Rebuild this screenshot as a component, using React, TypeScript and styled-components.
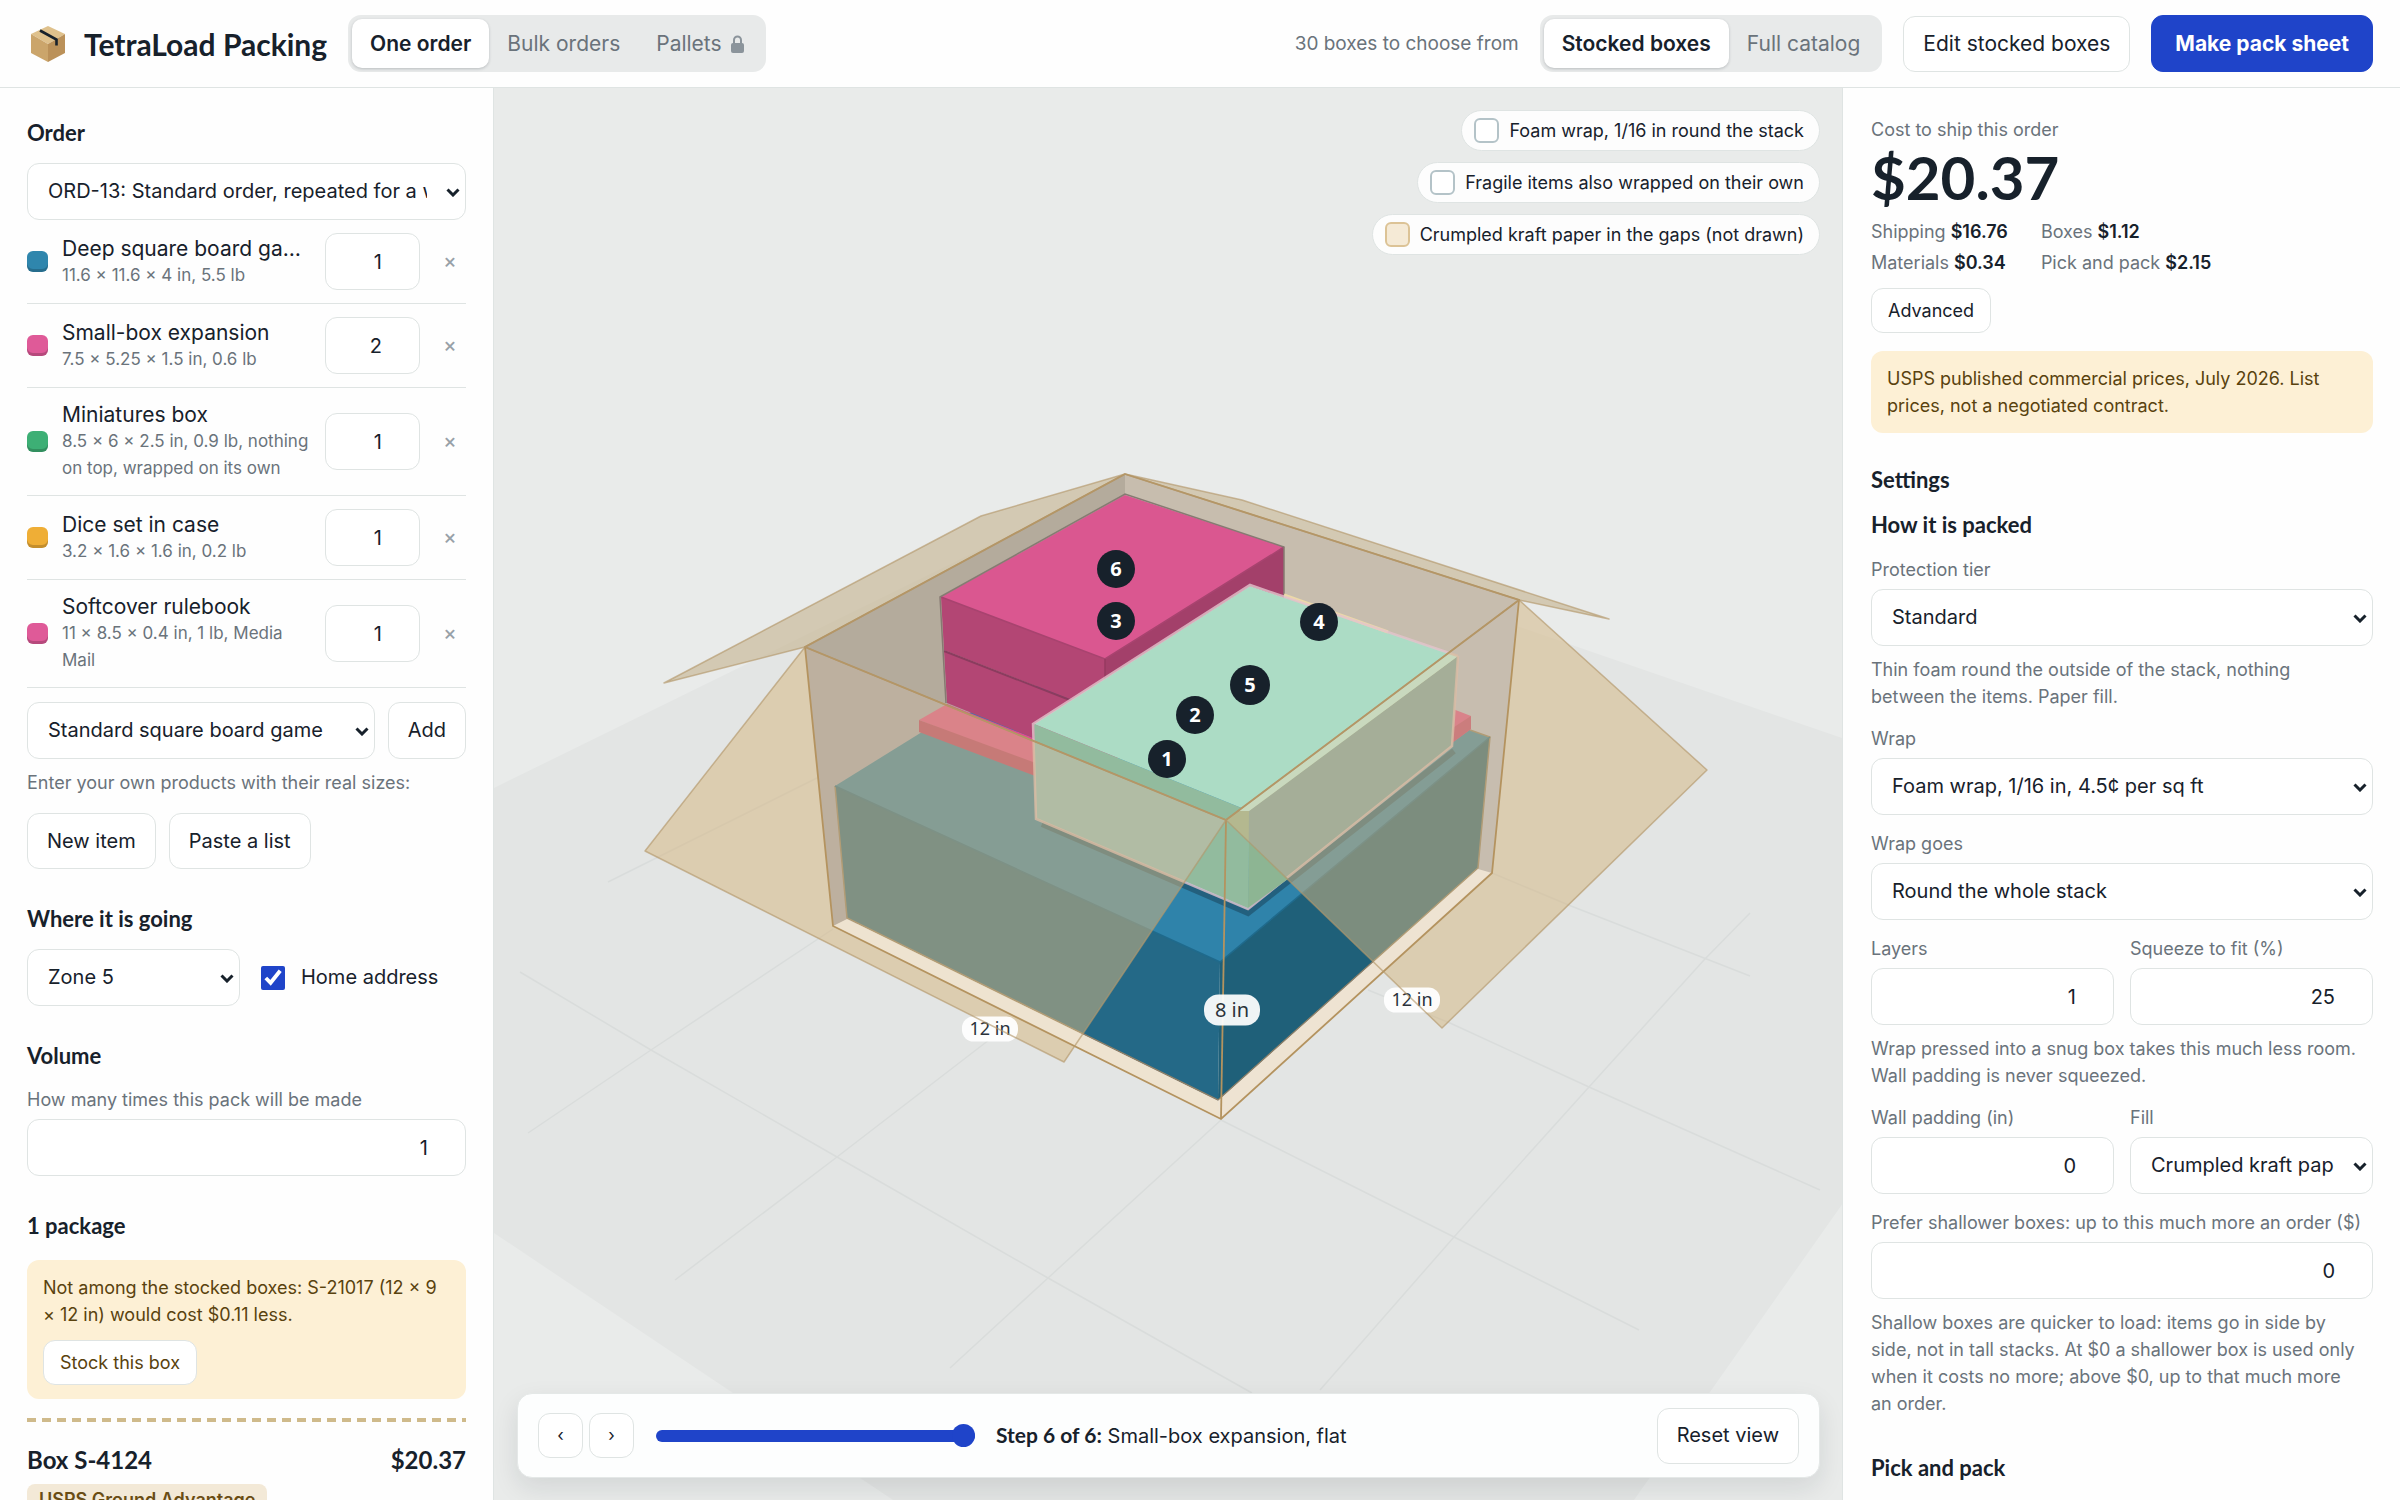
import React, { useState } from "react";
import styled, { createGlobalStyle, css } from "styled-components";

const ink = "#17212b";
const muted = "#6a737b";
const line = "#dfe4e3";
const blue = "#1f44c9";
const heading = `"Lato", "Open Sans", sans-serif`;

const GlobalStyle = createGlobalStyle`
  * { box-sizing: border-box; }
  body { margin: 0; background: #fefefe; color: ${ink}; font: 400 20px/27px "Inter", "Noto Sans", sans-serif; }
  button, input, select { font: inherit; color: inherit; margin: 0; }
  h1, h2, h3, p, ul, dl, dd { margin: 0; padding: 0; }
`;

/* ---------- shared parts ---------- */

const Button = styled.button<{ $size?: "small" | "icon"; $primary?: boolean }>`
  height: 56px;
  padding: 0 19px;
  border: 1px solid ${line};
  border-radius: 12px;
  background: #fff;
  white-space: nowrap;
  ${(p) => p.$size === "small" && css`height: 45px; padding: 0 16px; font-size: 18px;`}
  ${(p) => p.$size === "icon" && css`height: 45px; width: 45px; padding: 0; font-size: 17px;`}
  ${(p) => p.$primary && css`
    height: 57px;
    padding: 0 23px;
    border-color: ${blue};
    background: ${blue};
    color: #fff;
    font-weight: 700;
  `}
`;

const fieldBox = css`
  width: 100%;
  height: 57px;
  border: 1px solid ${line};
  border-radius: 12px;
  background: #fff;
  outline: 0;
`;

const NumberInput = styled.input.attrs({ type: "number" })`
  ${fieldBox}
  padding: 0 37px 0 12px;
  text-align: right;
  appearance: textfield;
  &::-webkit-inner-spin-button { display: none; }
`;

const SelectWrap = styled.div`
  position: relative;
  flex: 1;
  min-width: 0;
  svg { position: absolute; right: 6px; top: 50%; margin-top: -4px; pointer-events: none; }
`;

const NativeSelect = styled.select`
  ${fieldBox}
  display: block;
  appearance: none;
  padding: 0 38px 0 20px;
`;

function Select({ id, label, value }: { id: string; label?: string; value: string }) {
  return (
    <SelectWrap>
      <NativeSelect id={id} aria-label={label} defaultValue={value}>
        <option>{value}</option>
      </NativeSelect>
      <svg width="14" height="9" viewBox="0 0 14 9" aria-hidden="true">
        <path d="M1.5 1.5 7 7l5.5-5.5" fill="none" stroke={ink} strokeWidth="3" />
      </svg>
    </SelectWrap>
  );
}

const SectionTitle = styled.h2`
  font: 700 22px/27px ${heading};
`;

const Hint = styled.p`
  padding-right: 12px;
  color: ${muted};
  font-size: 18px;
`;

const FieldBlock = styled.div`
  display: flex;
  flex-direction: column;
  gap: 6px;
  min-width: 0;
  label { color: ${muted}; font-size: 18px; white-space: nowrap; }
  ${Hint} { margin-top: 4px; }
`;

const Notice = styled.div`
  display: flex;
  flex-direction: column;
  align-items: flex-start;
  gap: 12px;
  padding: 14px 16px;
  border-radius: 12px;
  background: #fdf0d5;
  color: #59420e;
  font-size: 18px;
`;

/* ---------- page frame ---------- */

const Page = styled.div`
  display: flex;
  flex-direction: column;
  height: 100vh;
`;

const Header = styled.header`
  display: flex;
  align-items: center;
  gap: 21px;
  flex: none;
  height: 88px;
  padding: 0 27px;
  border-bottom: 1px solid ${line};
  font-size: 21px;
`;

const Brand = styled.h1`
  display: flex;
  align-items: center;
  gap: 15px;
  font: 700 30px/36px ${heading};
  white-space: nowrap;
`;

const HeaderNote = styled.span`
  margin-left: auto;
  color: ${muted};
  font-size: 19px;
`;

const Segments = styled.div`
  display: flex;
  padding: 4px;
  border-radius: 13px;
  background: #e8eaea;
`;

const Segment = styled.button<{ $active?: boolean }>`
  display: flex;
  align-items: center;
  gap: 9px;
  height: 49px;
  padding: 0 18px;
  border: 0;
  border-radius: 10px;
  background: transparent;
  color: ${muted};
  white-space: nowrap;
  ${(p) => p.$active && css`
    background: #fff;
    color: ${ink};
    font-weight: 600;
    box-shadow: 0 1px 3px rgba(23, 33, 43, 0.22);
  `}
`;

const Columns = styled.div`
  display: grid;
  grid-template-columns: 494px minmax(0, 1fr) 558px;
  flex: 1;
  min-height: 0;
`;

const Panel = styled.aside<{ $side: "left" | "right" }>`
  display: flex;
  flex-direction: column;
  overflow-y: auto;
  scrollbar-width: none;
  padding: ${(p) => (p.$side === "left" ? "31px 27px 0" : "28px 27px 0 28px")};
  border: 0 solid ${line};
  border-${(p) => (p.$side === "left" ? "right" : "left")}-width: 1px;
`;

/* ---------- order panel ---------- */

const Section = styled.section`
  display: flex;
  flex-direction: column;
  flex: none;
  margin-bottom: 36px;
  > ${SectionTitle} { margin-bottom: 17px; }
`;

const ItemList = styled.ul`
  list-style: none;
  margin-bottom: 14px;
`;

const ItemRow = styled.li`
  display: grid;
  grid-template-columns: 21px minmax(0, 1fr) 95px 32px;
  align-items: center;
  gap: 14px;
  padding: 13px 0;
  border-bottom: 1px solid ${line};
`;

const Swatch = styled.span<{ $color: string }>`
  width: 21px;
  height: 21px;
  border-radius: 6px;
  background: ${(p) => p.$color};
  box-shadow: inset 0 -3px 0 rgba(0, 0, 0, 0.18);
`;

const ItemName = styled.div`
  overflow: hidden;
  font-size: 21px;
  text-overflow: ellipsis;
  white-space: nowrap;
`;

const ItemDetail = styled.div`
  color: ${muted};
  font-size: 17px;
`;

const RemoveButton = styled.button`
  height: 32px;
  padding: 0;
  border: 0;
  background: none;
  color: #98a1a8;
  font-weight: 500;
`;

const ButtonRow = styled.div`
  display: flex;
  gap: 13px;
`;

const AddRow = styled(ButtonRow)`
  margin-bottom: 10px;
  ${Button} { height: 57px; }
`;

const OwnProducts = styled(Hint)`
  margin-bottom: 17px;
`;

const Destination = styled.div`
  display: grid;
  grid-template-columns: 213px 1fr;
  align-items: center;
  gap: 21px;
`;

const CheckLabel = styled.label`
  display: flex;
  align-items: center;
  gap: 16px;
`;

const CheckBox = styled.input.attrs({ type: "checkbox" })`
  width: 24px;
  height: 24px;
  accent-color: ${blue};
`;

const PackageNotice = styled(Notice)`
  margin-top: 4px;
`;

const TapeLine = styled.hr`
  width: 100%;
  height: 4px;
  margin: 19px 0 22px;
  border: 0;
  background: repeating-linear-gradient(90deg, #cfba8b 0 9px, transparent 9px 15px);
`;

const PackageHead = styled.div`
  display: flex;
  justify-content: space-between;
  margin-bottom: 8px;
  font: 700 24px/32px ${heading};
`;

const Tag = styled.span`
  align-self: flex-start;
  padding: 2px 12px;
  border-radius: 8px;
  background: #f3e9d7;
  color: #6a4d14;
  font-size: 18px;
  font-weight: 600;
`;

/* ---------- 3D view ---------- */

const Stage = styled.main`
  position: relative;
  overflow: hidden;
  background: #e9ebea;
`;

const SceneSvg = styled.svg`
  display: block;
  width: 100%;
  height: 100%;
`;

const Legend = styled.div`
  position: absolute;
  top: 22px;
  right: 22px;
  display: flex;
  flex-direction: column;
  align-items: flex-end;
  gap: 11px;
`;

const LegendPill = styled.div`
  display: flex;
  align-items: center;
  gap: 10px;
  height: 41px;
  padding: 0 15px 0 12px;
  border: 1px solid ${line};
  border-radius: 21px;
  background: #fdfdfd;
  font-size: 18px;
`;

const LegendSwatch = styled.span<{ $paper?: boolean }>`
  width: 25px;
  height: 25px;
  border: 2px solid ${(p) => (p.$paper ? "#dcc396" : "#b4c3c8")};
  border-radius: 6px;
  background: ${(p) => (p.$paper ? "#f5ead6" : "#fff")};
`;

const StepBar = styled.div`
  position: absolute;
  left: 23px;
  right: 22px;
  bottom: 22px;
  display: flex;
  align-items: center;
  height: 85px;
  padding: 0 20px;
  border: 1px solid #e4e8e7;
  border-radius: 15px;
  background: #fdfefe;
  box-shadow: 0 10px 26px rgba(23, 33, 43, 0.1);
`;

const StepButtons = styled.div`
  display: flex;
  gap: 6px;
  margin-right: 22px;
`;

const StepSlider = styled.input.attrs({ type: "range" })`
  appearance: none;
  width: 319px;
  height: 24px;
  margin-right: 21px;
  background: transparent;
  &::-webkit-slider-runnable-track { height: 12px; border-radius: 6px; background: ${blue}; }
  &::-webkit-slider-thumb {
    appearance: none;
    width: 23px;
    height: 23px;
    margin-top: -6px;
    border-radius: 50%;
    background: ${blue};
  }
`;

const StepText = styled.p`
  flex: 1;
  strong { font: 700 21px/27px ${heading}; }
`;

/* ---------- cost and settings panel ---------- */

const Price = styled.div`
  margin-top: 4px;
  font: 700 60px/60px ${heading};
`;

const Costs = styled.dl`
  display: grid;
  grid-template-columns: max-content max-content;
  gap: 4px 33px;
  margin: 11px 0 12px;
  color: ${muted};
  font-size: 18px;
  div { display: flex; gap: 5px; }
  dd { color: ${ink}; font-weight: 600; }
`;

const CostBlock = styled.section`
  display: flex;
  flex-direction: column;
  align-items: flex-start;
  flex: none;
  ${Notice} { width: 100%; margin-top: 18px; }
`;

const Settings = styled.section`
  display: flex;
  flex-direction: column;
  flex: none;
  gap: 15px;
  margin-top: 33px;
`;

const SettingsTitles = styled.div`
  display: flex;
  flex-direction: column;
  gap: 18px;
  margin-bottom: 3px;
`;

const Pair = styled.div`
  display: grid;
  grid-template-columns: 1fr 1fr;
  gap: 0 16px;
  > ${Hint} { grid-column: 1 / -1; margin-top: 10px; }
`;

const NextTitle = styled(SectionTitle)`
  margin: 22px 0 40px;
`;

/* ---------- drawings ---------- */

function Logo() {
  return (
    <svg width="42" height="42" viewBox="0 0 42 42" aria-hidden="true">
      <path d="M21 3 38 11 21 21 4 11Z" fill="#dfc18c" />
      <path d="M4 11 21 21V39L4 30Z" fill="#cba56b" />
      <path d="M38 11 21 21V39L38 30Z" fill="#bb9159" />
      <path d="M13 7.500 29.500 16.500V22.500" fill="none" stroke="#17212b" strokeWidth="2.600" />
    </svg>
  );
}

function Lock() {
  return (
    <svg width="13" height="18" viewBox="0 0 13 18" aria-hidden="true">
      <rect x="0" y="8" width="13" height="10" rx="2" fill="#8b949b" />
      <path d="M3 9V5a3.500 3.500 0 0 1 7 0v4" fill="none" stroke="#8b949b" strokeWidth="2" />
    </svg>
  );
}

const gridLines = [
  "1221,1120 1048,1278 950,1368", "998,1033 837,1157 675,1280", "833,929 651,1050 528,1133",
  "1750,913 1704,960 1589,1087 1454,1237 1320,1390", "520,972 651,1050 837,1157 1048,1278 1252,1393",
  "1221,1120 1454,1237 1639,1330", "1368,990 1450,1023 1589,1087 1820,1190", "1492,873 1571,906 1750,976",
  "608,882 833,770",
];

const boxEdges = [
  "1125,474 805,647 833,926 1221,1119 1492,873 1519,600 1125,474",
  "805,647 1226,820 1519,600", "1226,820 1221,1119",
];

const flaps = [
  { points: "805,647 1125,474 981,516 664,683", fill: "rgb(192,171,128)" },
  { points: "1125,474 1519,600 1609,619 1242,500", fill: "rgb(192,171,128)" },
  { points: "805,647 1226,820 1064,1062 645,851", fill: "rgb(212,183,129)" },
  { points: "1519,600 1226,820 1442,1028 1707,770", fill: "rgb(210,182,130)" },
];

const markers: [number, number, number, number][] = [
  [6, 1116, 569, 19], [3, 1116, 621, 19], [4, 1319, 622, 19],
  [5, 1250, 685, 20], [2, 1195, 715, 19], [1, 1167, 759, 19],
];

function SizeLabel({ x, y, text, big }: { x: number; y: number; text: string; big?: boolean }) {
  const h = big ? 31 : 25;
  return (
    <g>
      <rect x={x - 28} y={y - h / 2} width="56" height={h} rx={h / 2 - 1} fill="#fff" fillOpacity="0.93" />
      <text x={x} y={y + (big ? 7 : 6)} fontSize={big ? 20 : 18} textAnchor="middle" fill="#2a323a">{text}</text>
    </g>
  );
}

function Scene() {
  return (
    <SceneSvg viewBox="494 88 1348 1412" preserveAspectRatio="xMidYMid slice" fontFamily="Noto Sans, sans-serif" role="img" aria-label="Open box with six packed items">
      <polygon points="400,834 1110,486 1842,738 1960,780 1843,1203 1634,1500 893,1500 494,1233 400,1171" fill="#e3e5e4" />
      {gridLines.map((p) => (
        <polyline key={p} points={p} fill="none" stroke="#d9dcdb" strokeWidth="1.500" />
      ))}

      {/* inner walls */}
      <polygon points="805,647 1125,474 1125,780 833,926" fill="#b4ab9c" />
      <polygon points="805,647 1226,820 1125,900 833,926" fill="#a4aac1" />
      <polygon points="1125,474 1519,600 1492,873 1125,780" fill="#c7bdae" />
      <polygon points="1519,600 1226,820 1300,900 1492,873" fill="#bbc4df" />

      {/* deep square board game */}
      <polygon points="835,786 922,732 1125,650 1470,730 1490,737 1220,962" fill="#2f83aa" />
      <polygon points="835,786 1220,962 1218,1100 847,918" fill="#246987" />
      <polygon points="1220,962 1490,737 1478,868 1218,1100" fill="#1f6079" />
      <polyline points="835,786 847,918 1218,1100 1478,868 1490,737 1470,730" fill="none" stroke="#8d8069" strokeWidth="1.500" />
      <polyline points="835,786 1220,962 1490,737" fill="none" stroke="#1f6a8c" strokeWidth="1.500" />

      {/* rulebook */}
      <polygon points="919,720 947,704 1120,772 1120,800" fill="#df4d92" />
      <polygon points="919,720 1120,794 1120,808 919,732" fill="#b73a6e" />
      <polygon points="1440,704 1471,716 1471,729 1445,748" fill="#df4d92" />
      <polygon points="1471,716 1471,729 1445,748 1445,733" fill="#c33f78" />

      {/* two small-box expansions */}
      <polygon points="1105,659 1284,547 1284,640 1105,767" fill="#a3406a" />
      <polygon points="944,651 1105,714 1105,767 947,703" fill="#b34674" />
      <polygon points="941,597 1105,659 1105,713 944,650" fill="#b34674" />
      <polygon points="1125,495 1284,547 1105,659 941,597" fill="#da5790" />
      <polyline points="941,597 1105,659 1284,547" fill="none" stroke="#a8436f" strokeWidth="1.500" />
      <polyline points="1105,659 1105,690" fill="none" stroke="#963a60" strokeWidth="1.500" />
      <polyline points="944,651 1075,702" fill="none" stroke="#8b3c5f" strokeWidth="2" />
      <polyline points="1284,595 1284,547 1125,494 940,597 946,703" fill="none" stroke="#867a72" strokeWidth="1.500" />

      {/* miniatures box, with the parts seen through the flaps in their own tone */}
      <polyline points="1042,824 1248,913 1454,751" fill="none" stroke="#1d4a60" strokeWidth="6" opacity="0.6" />
      <polygon points="1034,724 1249,811 1458,656 1452,746 1248,908 1036,818" fill="#92bb9e" />
      <polygon points="1034,741 1226,820 1249,842 1248,908 1036,818" fill="#8ac2ca" />
      <polygon points="1249,811 1458,656 1452,746 1248,908" fill="#73a5af" />
      <polygon points="1034,724 1250,586 1458,656 1249,811" fill="#acdcc5" />
      <polygon points="1238,811 1449,652 1458,656 1249,811" fill="#bfffff" />
      <polyline points="1284,595 1388,632" fill="none" stroke="#ecd9a8" strokeWidth="3" />
      <polyline points="1458,656 1250,585 1033,724 1036,819 1248,909 1452,746 1458,656" fill="none" stroke="#e3c3cc" strokeWidth="2.500" opacity="0.8" />

      {flaps.map((f) => (
        <polygon key={f.points} points={f.points} fill={f.fill} fillOpacity="0.52" />
      ))}

      {/* part of the miniatures box between the front flaps */}
      <polygon points="1226,820 1185,881 1248,908 1249,842" fill="#92bb9e" />
      <polygon points="1249,842 1248,908 1288,879" fill="#8db593" />

      {/* box floor */}
      <polygon points="833,926 847,919 1218,1101 1221,1119" fill="#eee3d0" />
      <polygon points="1221,1119 1218,1101 1478,869 1492,873" fill="#eee3d2" />

      {boxEdges.map((p) => (
        <polyline key={p} points={p} fill="none" stroke="#b4935f" strokeWidth="1.800" />
      ))}
      <SizeLabel x={990} y={1029} text="12 in" />
      <SizeLabel x={1412} y={1000} text="12 in" />
      <SizeLabel x={1232} y={1010} text="8 in" big />
      {flaps.map((f) => (
        <polygon key={f.points} points={f.points} fill="none" stroke="#b3986c" strokeWidth="1.500" strokeLinejoin="round" opacity="0.65" />
      ))}
      {markers.map(([n, x, y, r]) => (
        <g key={n}>
          <circle cx={x} cy={y} r={r} fill="#17212b" />
          <text x={x} y={y + 7} fontSize="20" fontWeight="700" textAnchor="middle" fill="#fff">{n}</text>
        </g>
      ))}
    </SceneSvg>
  );
}

/* ---------- content ---------- */

const items = [
  { name: "Deep square board game", detail: "11.6 × 11.6 × 4 in, 5.5 lb", count: 1, color: "#2f86ad" },
  { name: "Small-box expansion", detail: "7.5 × 5.25 × 1.5 in, 0.6 lb", count: 2, color: "#df5a98" },
  { name: "Miniatures box", detail: "8.5 × 6 × 2.5 in, 0.9 lb, nothing on top, wrapped on its own", count: 1, color: "#3daf75" },
  { name: "Dice set in case", detail: "3.2 × 1.6 × 1.6 in, 0.2 lb", count: 1, color: "#efae36" },
  { name: "Softcover rulebook", detail: "11 × 8.5 × 0.4 in, 1 lb, Media Mail", count: 1, color: "#df5a98" },
];

const costs = [["Shipping", "$16.76"], ["Boxes", "$1.12"], ["Materials", "$0.34"], ["Pick and pack", "$2.15"]];

function SelectField({ id, label, value, hint }: { id: string; label: string; value: string; hint?: string }) {
  return (
    <FieldBlock>
      <label htmlFor={id}>{label}</label>
      <Select id={id} value={value} />
      {hint && <Hint>{hint}</Hint>}
    </FieldBlock>
  );
}

function NumberField({ id, label, value, hint }: { id: string; label: string; value: number; hint?: string }) {
  return (
    <FieldBlock>
      <label htmlFor={id}>{label}</label>
      <NumberInput id={id} defaultValue={value} />
      {hint && <Hint>{hint}</Hint>}
    </FieldBlock>
  );
}

export default function App() {
  const [step, setStep] = useState(6);
  return (
    <Page>
      <GlobalStyle />
      <Header>
        <Brand><Logo />TetraLoad Packing</Brand>
        <Segments>
          <Segment $active>One order</Segment>
          <Segment>Bulk orders</Segment>
          <Segment>Pallets <Lock /></Segment>
        </Segments>
        <HeaderNote>30 boxes to choose from</HeaderNote>
        <Segments>
          <Segment $active>Stocked boxes</Segment>
          <Segment>Full catalog</Segment>
        </Segments>
        <Button>Edit stocked boxes</Button>
        <Button $primary>Make pack sheet</Button>
      </Header>

      <Columns>
        <Panel $side="left">
          <Section>
            <SectionTitle>Order</SectionTitle>
            <Select id="order" label="Order" value="ORD-13: Standard order, repeated for a week" />
            <ItemList>
              {items.map((item) => (
                <ItemRow key={item.name}>
                  <Swatch $color={item.color} />
                  <div>
                    <ItemName>{item.name}</ItemName>
                    <ItemDetail>{item.detail}</ItemDetail>
                  </div>
                  <NumberInput aria-label={`Quantity of ${item.name}`} defaultValue={item.count} />
                  <RemoveButton aria-label={`Remove ${item.name}`}>×</RemoveButton>
                </ItemRow>
              ))}
            </ItemList>
            <AddRow>
              <Select id="product" label="Product" value="Standard square board game" />
              <Button>Add</Button>
            </AddRow>
            <OwnProducts>Enter your own products with their real sizes:</OwnProducts>
            <ButtonRow>
              <Button>New item</Button>
              <Button>Paste a list</Button>
            </ButtonRow>
          </Section>

          <Section>
            <SectionTitle>Where it is going</SectionTitle>
            <Destination>
              <Select id="zone" label="Zone" value="Zone 5" />
              <CheckLabel><CheckBox defaultChecked />Home address</CheckLabel>
            </Destination>
          </Section>

          <Section>
            <SectionTitle>Volume</SectionTitle>
            <NumberField id="volume" label="How many times this pack will be made" value={1} />
          </Section>

          <Section>
            <SectionTitle>1 package</SectionTitle>
            <PackageNotice>
              <p>Not among the stocked boxes: S-21017 (12 × 9 × 12 in) would cost $0.11 less.</p>
              <Button $size="small">Stock this box</Button>
            </PackageNotice>
            <TapeLine />
            <PackageHead><span>Box S-4124</span><span>$20.37</span></PackageHead>
            <Tag>USPS Ground Advantage</Tag>
          </Section>
        </Panel>

        <Stage>
          <Scene />
          <Legend>
            <LegendPill><LegendSwatch />Foam wrap, 1/16 in round the stack</LegendPill>
            <LegendPill><LegendSwatch />Fragile items also wrapped on their own</LegendPill>
            <LegendPill><LegendSwatch $paper />Crumpled kraft paper in the gaps (not drawn)</LegendPill>
          </Legend>
          <StepBar>
            <StepButtons>
              <Button $size="icon" aria-label="Previous step" onClick={() => setStep(Math.max(1, step - 1))}>‹</Button>
              <Button $size="icon" aria-label="Next step" onClick={() => setStep(Math.min(6, step + 1))}>›</Button>
            </StepButtons>
            <StepSlider aria-label="Step" min={1} max={6} value={step} onChange={(e) => setStep(Number(e.target.value))} />
            <StepText><strong>Step {step} of 6:</strong> Small-box expansion, flat</StepText>
            <Button>Reset view</Button>
          </StepBar>
        </Stage>

        <Panel $side="right">
          <CostBlock>
            <Hint>Cost to ship this order</Hint>
            <Price>$20.37</Price>
            <Costs>
              {costs.map(([name, value]) => (
                <div key={name}><dt>{name}</dt><dd>{value}</dd></div>
              ))}
            </Costs>
            <Button $size="small">Advanced</Button>
            <Notice>USPS published commercial prices, July 2026. List prices, not a negotiated contract.</Notice>
          </CostBlock>
          <Settings>
            <SettingsTitles>
              <SectionTitle>Settings</SectionTitle>
              <SectionTitle as="h3">How it is packed</SectionTitle>
            </SettingsTitles>
            <SelectField id="tier" label="Protection tier" value="Standard" hint="Thin foam round the outside of the stack, nothing between the items. Paper fill." />
            <SelectField id="wrap" label="Wrap" value="Foam wrap, 1/16 in, 4.5¢ per sq ft" />
            <SelectField id="wrap-goes" label="Wrap goes" value="Round the whole stack" />
            <Pair>
              <NumberField id="layers" label="Layers" value={1} />
              <NumberField id="squeeze" label="Squeeze to fit (%)" value={25} />
              <Hint>Wrap pressed into a snug box takes this much less room. Wall padding is never squeezed.</Hint>
            </Pair>
            <Pair>
              <NumberField id="padding" label="Wall padding (in)" value={0} />
              <SelectField id="fill" label="Fill" value="Crumpled kraft paper" />
            </Pair>
            <NumberField
              id="shallow"
              label="Prefer shallower boxes: up to this much more an order ($)"
              value={0}
              hint="Shallow boxes are quicker to load: items go in side by side, not in tall stacks. At $0 a shallower box is used only when it costs no more; above $0, up to that much more an order."
            />
            <NextTitle as="h3">Pick and pack</NextTitle>
          </Settings>
        </Panel>
      </Columns>
    </Page>
  );
}
